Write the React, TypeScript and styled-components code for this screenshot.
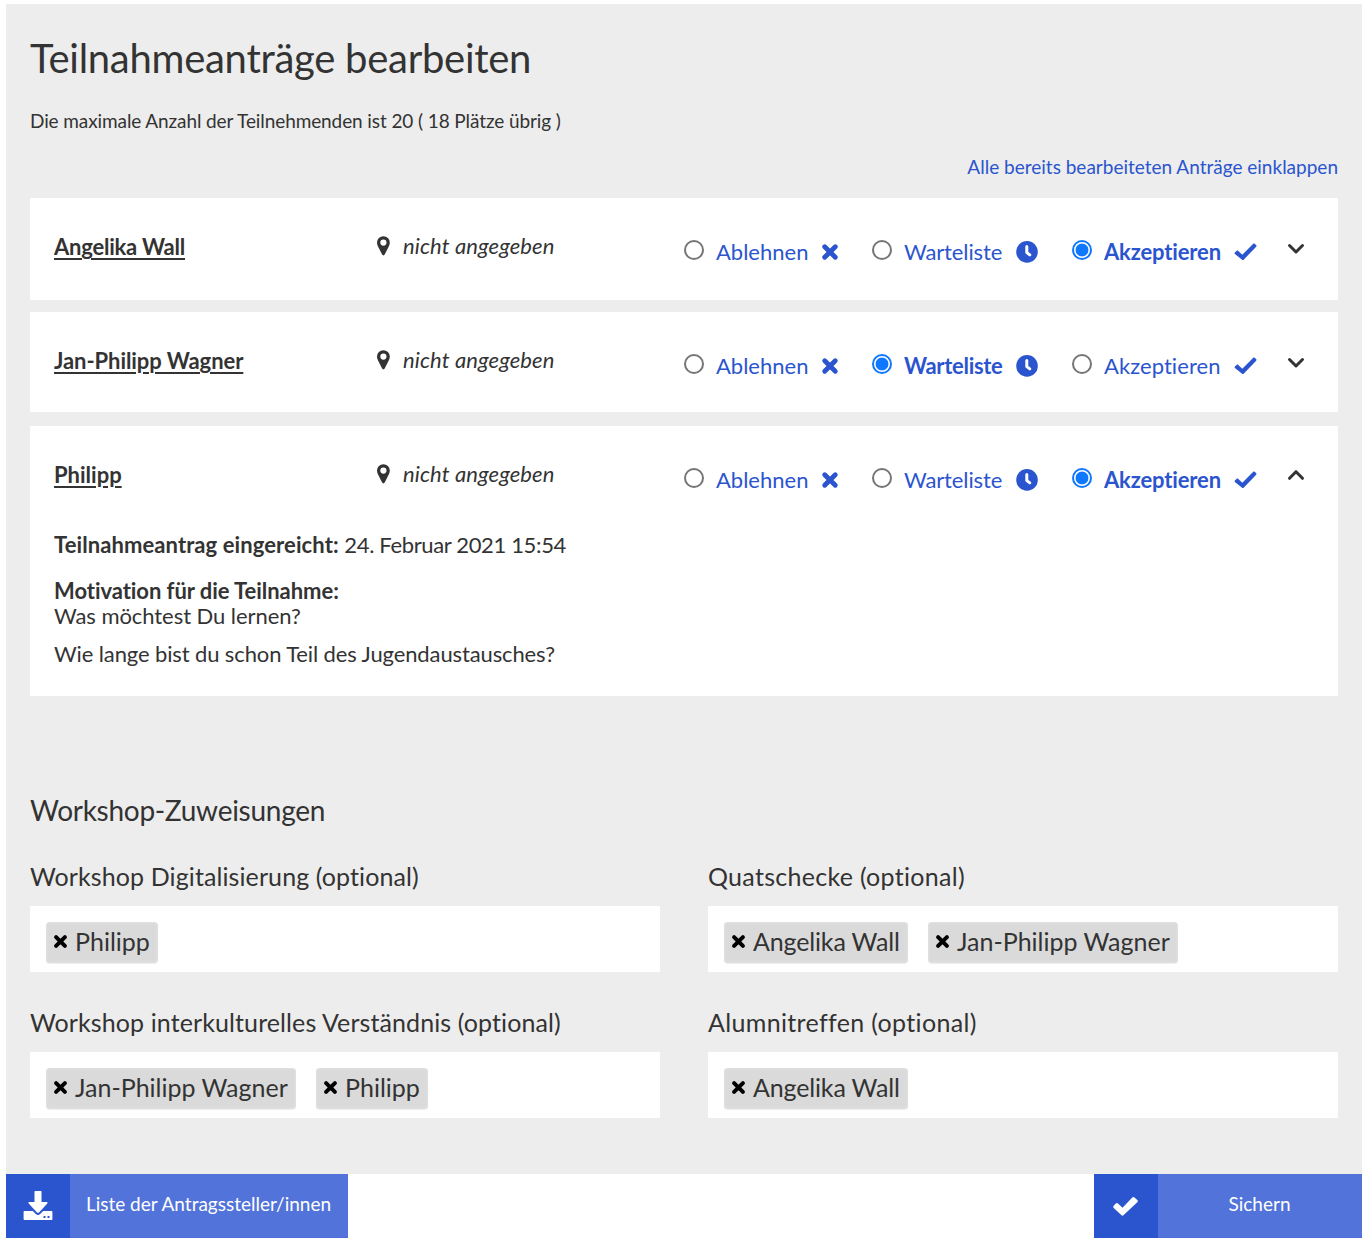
import React from "react";
import styled, { createGlobalStyle } from "styled-components";

const INK = "#333333";
const BLUE = "#2b55ce";

const Global = createGlobalStyle`
  *, *::before, *::after { box-sizing: border-box; }
  body {
    margin: 0;
    background: #fff;
    color: ${INK};
    font-family: Lato, "Open Sans", sans-serif;
    font-variant-ligatures: none;
  }
  h1, h2, p { margin: 0; font-weight: 400; }
`;

/* Text whose advance is tuned per use through its letter spacing. */
const T = styled.span<{ $ls?: number }>`
  letter-spacing: ${(p) => p.$ls ?? 0}px;
  white-space: nowrap;
`;

const Page = styled.main`
  width: 1366px;
  height: 1242px;
  padding: 4px 4px 0 6px;
  overflow: hidden;
`;

const Panel = styled.section`
  height: 1170px;
  padding: 0 24px;
  background: #ededed;
  display: flex;
  flex-direction: column;
`;

const Title = styled.h1`
  margin-top: 30px;
  font-size: 40px;
  line-height: 48px;
  white-space: nowrap;
`;

const Info = styled.p`
  margin-top: 27px;
  font-size: 19px;
  line-height: 24px;
`;

const CollapseLink = styled.a`
  align-self: flex-end;
  margin-top: 22px;
  font-size: 19px;
  line-height: 24px;
  color: ${BLUE};
`;

const Cards = styled.div`
  margin-top: 19px;
  display: flex;
  flex-direction: column;
`;

const Card = styled.article<{ $h: number; $gap: number }>`
  height: ${(p) => p.$h}px;
  margin-bottom: ${(p) => p.$gap}px;
  padding: 34px 24px 0;
  background: #fff;
`;

const Head = styled.div`
  display: grid;
  grid-template-columns: 322px 308px 188px 200px 222px 1fr;
  align-items: start;
  height: 40px;
`;

const Name = styled.a`
  font-size: 22px;
  line-height: 30px;
  font-weight: 700;
  text-decoration: underline;
  text-decoration-thickness: 2px;
  text-underline-offset: 3px;
`;

const Place = styled.span`
  display: flex;
  align-items: flex-start;
  gap: 13px;
  height: 30px;
  font-size: 22px;
  line-height: 28px;
  font-style: italic;
  svg { display: block; flex: none; margin-top: 4px; }
`;

const Choice = styled.label<{ $on: boolean }>`
  display: flex;
  height: 40px;
  color: ${BLUE};
  font-size: 22px;
  line-height: 40px;
  font-weight: ${(p) => (p.$on ? 700 : 400)};
`;

const Radio = styled.input`
  appearance: none;
  flex: none;
  width: 20px;
  height: 20px;
  margin: 8px 12px 0 0;
  border: 2px solid #767676;
  border-radius: 50%;
  background: #fff;
  &:checked {
    border-color: #1078fe;
    background: radial-gradient(circle, #1078fe 6px, #fff 6.8px);
  }
`;

const ChoiceText = styled.span<{ $w: number }>`
  width: ${(p) => p.$w}px;
  margin-right: 12px;
`;

const ChoiceIcon = styled.span<{ $top: number }>`
  flex: none;
  margin-top: ${(p) => p.$top}px;
  line-height: 0;
`;

const Toggle = styled.button`
  justify-self: start;
  margin: 8px 0 0 -8px;
  padding: 0;
  border: 0;
  background: none;
  line-height: 0;
`;

const Details = styled.div`
  font-size: 22px;
  line-height: 26px;
`;

const Line = styled.p<{ $top: number }>`
  margin-top: ${(p) => p.$top}px;
`;

const Sub = styled.h2`
  margin-top: 96px;
  font-size: 28px;
  line-height: 36px;
`;

const Grid = styled.div`
  margin-top: 31px;
  display: grid;
  grid-template-columns: 630px 630px;
  column-gap: 48px;
  row-gap: 33px;
`;

const FieldLabel = styled.div`
  height: 47px;
  font-size: 25px;
  line-height: 34px;
`;

const FieldBox = styled.div`
  display: flex;
  gap: 20px;
  height: 66px;
  padding: 16px;
  background: #fff;
`;

const Tag = styled.span<{ $w: number }>`
  display: flex;
  align-items: flex-start;
  width: ${(p) => p.$w}px;
  height: 41px;
  padding-left: 7px;
  border-radius: 4px;
  background: #dadada;
  box-shadow: inset 0 0 3px #e8e8e8, 0 1px 1px #eee;
  font-size: 25px;
  line-height: 38px;
  svg { flex: none; margin: 12px 7px 0 0; }
`;

const Footer = styled.footer`
  display: flex;
  justify-content: space-between;
  height: 64px;
`;

const Action = styled.button<{ $w: number }>`
  display: flex;
  width: ${(p) => p.$w}px;
  height: 64px;
  padding: 0;
  border: 0;
  background: #5273da;
  box-shadow: inset 0 -1px 0 #4b6dd4;
  color: #fff;
  font-family: inherit;
  font-size: 19px;
  line-height: 60px;
`;

const ActionIcon = styled.span`
  width: 64px;
  height: 64px;
  display: flex;
  align-items: center;
  justify-content: center;
  background: ${BLUE};
`;

const ActionText = styled.span`
  flex: 1;
  padding-right: 1px;
  text-align: center;
`;

const Pin = () => (
  <svg width="14" height="20" viewBox="0 0 14 20" fill={INK}>
    <path fillRule="evenodd" d="M7.4.2A6.4 6.4 0 0 0 1 6.6c0 1.3.3 2.2.8 3.3l4.3 8.7c.5 1.1 2.1 1.1 2.6 0L13 9.9c.5-1.1.8-2 .8-3.3A6.4 6.4 0 0 0 7.4.2Zm0 9.5a3.1 3.1 0 1 1 0-6.2 3.1 3.1 0 0 1 0 6.2Z" />
  </svg>
);

const Cross = ({ size, color, width }: { size: number; color: string; width: number }) => (
  <svg width={size} height={size} viewBox="0 0 18 18" fill="none" stroke={color} strokeWidth={width} strokeLinecap="round">
    <path d="M3.7 3.7 14.3 14.3M14.3 3.7 3.7 14.3" />
  </svg>
);

const Clock = () => (
  <svg width="22" height="22" viewBox="0 0 22 22">
    <circle cx="11" cy="10.9" r="10.8" fill={BLUE} />
    <path d="M10.8 5.4v6.2l3 2.3" fill="none" stroke="#fff" strokeWidth="3" strokeLinecap="round" strokeLinejoin="round" />
  </svg>
);

const Tick = () => (
  <svg width="24" height="24" viewBox="0 0 24 24" fill={BLUE}>
    <path d="M1.9 12.6 3.5 10.9c.6-.6 1.3-.5 1.8 0l4 3.8L20 3.9c.5-.5 1.1-.5 1.6-.1L23.100 5.100c.5.500.5 1 .1 1.600L10.900 19.400c-.6.700-1.500.7-2.100 0l-6.900-5.400c-.5-.5-.5-.9 0-1.400Z" />
  </svg>
);

const SaveTick = () => (
  <svg width="26" height="22" viewBox="0 0 26 22" fill="#fff">
    <path d="M.7 10.8 2.8 8.6c.7-.7 1.5-.7 2.2 0l4.5 4.2L19.3 2.5c.7-.7 1.5-.7 2.2 0L24.3 5c.7.7.7 1.5 0 2.2L10.7 20.1c-.7.7-1.7.7-2.4 0L.7 12.9c-.6-.6-.6-1.4 0-2.1Z" />
  </svg>
);

const Chevron = ({ up }: { up?: boolean }) => (
  <svg width="20" height="18" viewBox="0 0 20 18" fill="none" stroke={INK} strokeWidth="3" strokeLinecap="round" strokeLinejoin="round">
    <path d={up ? "m3.5 10.3 6.5-6.6 6.5 6.6" : "m3.5 5.5 6.5 6.5 6.5-6.5"} />
  </svg>
);

const Download = () => (
  <svg width="30" height="30" viewBox="0 0 30 30" fill="#fff">
    <path d="M11.5.9c0-.6.4-1 1-1h5c.6 0 1 .4 1 1V11h5.2c.9 0 1.200.8.6 1.500L16 21.400c-.6.600-1.400.6-2 0L5.700 12.500c-.6-.7-.3-1.500.6-1.500h5.200Z" />
    <path fillRule="evenodd" d="M1.600 19.900h8.200l3 3.100a3.100 3.100 0 0 0 4.400 0l3-3.100h8.200c.6 0 1 .4 1 1V28c0 .6-.4 1-1 1H1.600c-.6 0-1-.4-1-1v-7.100c0-.6.4-1 1-1ZM20.500 25.100v2h2v-2Zm4 0v2h2v-2Z" />
  </svg>
);

type Status = "reject" | "wait" | "accept";

const Applicant = ({ name, ls, status, open }: { name: string; ls: number; status: Status; open?: boolean }) => (
  <Head>
    <span><Name><T $ls={ls}>{name}</T></Name></span>
    <Place><Pin /><T $ls={0.12}>nicht angegeben</T></Place>
    <Choice $on={status === "reject"}>
      <Radio type="radio" checked={status === "reject"} readOnly />
      <ChoiceText $w={93}><T $ls={0}>Ablehnen</T></ChoiceText>
      <ChoiceIcon $top={11}><Cross size={18} color={BLUE} width={4.8} /></ChoiceIcon>
    </Choice>
    <Choice $on={status === "wait"}>
      <Radio type="radio" checked={status === "wait"} readOnly />
      <ChoiceText $w={100}><T $ls={status === "wait" ? -0.3 : -0.12}>Warteliste</T></ChoiceText>
      <ChoiceIcon $top={9}><Clock /></ChoiceIcon>
    </Choice>
    <Choice $on={status === "accept"}>
      <Radio type="radio" checked={status === "accept"} readOnly />
      <ChoiceText $w={117}><T $ls={status === "accept" ? -0.15 : 0.07}>Akzeptieren</T></ChoiceText>
      <ChoiceIcon $top={8}><Tick /></ChoiceIcon>
    </Choice>
    <Toggle aria-label="Details"><Chevron up={open} /></Toggle>
  </Head>
);

const fields: { label: string; ls: number; tags: [string, number, number][] }[] = [
  { label: "Workshop Digitalisierung (optional)", ls: 0.1, tags: [["Philipp", 112, 0]] },
  { label: "Quatschecke (optional)", ls: 0.29, tags: [["Angelika Wall", 184, -0.15], ["Jan-Philipp Wagner", 250, 0]] },
  { label: "Workshop interkulturelles Verständnis (optional)", ls: 0.1, tags: [["Jan-Philipp Wagner", 250, 0], ["Philipp", 112, 0]] },
  { label: "Alumnitreffen (optional)", ls: 0.34, tags: [["Angelika Wall", 184, -0.15]] },
];

export default function App() {
  return (
    <Page>
      <Global />
      <Panel>
        <Title><T $ls={-0.27}>Teilnahmeanträge bearbeiten</T></Title>
        <Info><T $ls={-0.1}>Die maximale Anzahl der Teilnehmenden ist 20 ( 18 Plätze übrig )</T></Info>
        <CollapseLink><T $ls={0}>Alle bereits bearbeiteten Anträge einklappen</T></CollapseLink>
        <Cards>
          <Card $h={102} $gap={12}><Applicant name="Angelika Wall" ls={-0.22} status="accept" /></Card>
          <Card $h={100} $gap={14}><Applicant name="Jan-Philipp Wagner" ls={-0.07} status="wait" /></Card>
          <Card $h={270} $gap={0}>
            <Applicant name="Philipp" ls={0} status="accept" open />
            <Details>
              <Line $top={32}><T $ls={0.09}><b>Teilnahmeantrag eingereicht:</b></T> <T $ls={-0.35}>24. Februar 2021 15:54</T></Line>
              <Line $top={20}><T $ls={-0.05}><b>Motivation für die Teilnahme:</b></T></Line>
              <Line $top={-1}><T $ls={-0.06}>Was möchtest Du lernen?</T></Line>
              <Line $top={12}><T $ls={-0.12}>Wie lange bist du schon Teil des Jugendaustausches?</T></Line>
            </Details>
          </Card>
        </Cards>
        <Sub><T $ls={-0.27}>Workshop-Zuweisungen</T></Sub>
        <Grid>
          {fields.map((f) => (
            <div key={f.label}>
              <FieldLabel><T $ls={f.ls}>{f.label}</T></FieldLabel>
              <FieldBox>
                {f.tags.map(([t, w, ls]) => (
                  <Tag key={t} $w={w}><Cross size={15} color="#000" width={4.8} /><T $ls={ls}>{t}</T></Tag>
                ))}
              </FieldBox>
            </div>
          ))}
        </Grid>
      </Panel>
      <Footer>
        <Action $w={342}><ActionIcon><Download /></ActionIcon><ActionText><T $ls={0}>Liste der Antragssteller/innen</T></ActionText></Action>
        <Action $w={268}><ActionIcon><SaveTick /></ActionIcon><ActionText><T $ls={0}>Sichern</T></ActionText></Action>
      </Footer>
    </Page>
  );
}
